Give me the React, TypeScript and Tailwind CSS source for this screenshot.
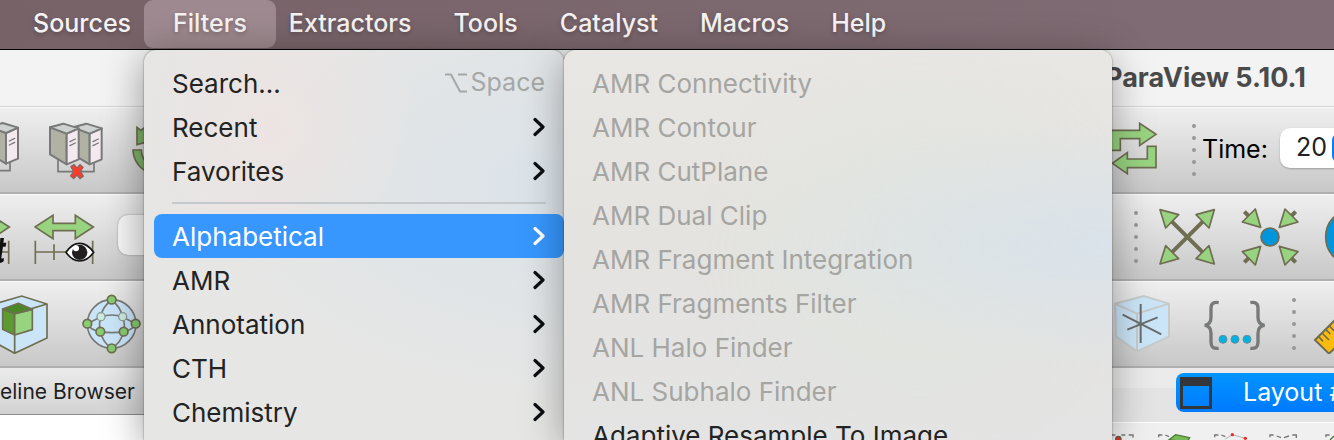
import type { ReactNode } from "react";

const menuTitles = ["Sources", "Filters", "Extractors", "Tools", "Catalyst", "Macros", "Help"];
const filterGroups = ["Alphabetical", "AMR", "Annotation", "CTH", "Chemistry"];
const alphabetical = [
  "AMR Connectivity",
  "AMR Contour",
  "AMR CutPlane",
  "AMR Dual Clip",
  "AMR Fragment Integration",
  "AMR Fragments Filter",
  "ANL Halo Finder",
  "ANL Subhalo Finder",
];

const OLIVE = "#6f6d52";
const GREEN = "#98d480";

function Chevron() {
  return (
    <svg className="h-5 w-3 shrink-0" viewBox="0 0 12 20" fill="none" stroke="currentColor" strokeWidth="3.2" strokeLinecap="round" strokeLinejoin="round" aria-hidden="true">
      <path d="M2 2.5 L10 10 L2 17.5" />
    </svg>
  );
}

function MenuRow({ label, active = false, disabled = false, trailing }: { label: string; active?: boolean; disabled?: boolean; trailing?: ReactNode }) {
  const tone = active ? "rounded-lg bg-[#3797fe] text-white" : disabled ? "text-[#a5a5a2]" : "text-[#222322]";
  return (
    <button type="button" role="menuitem" disabled={disabled} className={`flex h-11 w-full items-center justify-between pr-[19px] pl-[18px] text-left whitespace-nowrap ${tone}`}>
      <span>{label}</span>
      {trailing}
    </button>
  );
}

function SubmenuRow({ label, active }: { label: string; active?: boolean }) {
  return (
    <MenuRow
      label={label}
      active={active}
      trailing={
        <span className={active ? "text-white" : "text-[#0b0f12]"}>
          <Chevron />
        </span>
      }
    />
  );
}

function Icon({ box, className, children }: { box: string; className: string; children: ReactNode }) {
  return (
    <svg viewBox={box} className={`h-[60px] shrink-0 ${className}`} fill="none" aria-hidden="true">
      {children}
    </svg>
  );
}

function Grip({ className }: { className: string }) {
  return (
    <svg viewBox="0 0 4 52" className={`h-[52px] w-1 shrink-0 ${className}`} fill="#979797" aria-hidden="true">
      {[2, 14, 26, 38, 50].map((y) => (
        <circle key={y} cx="2" cy={y} r="2" />
      ))}
    </svg>
  );
}

function Tower() {
  return (
    <g stroke="#777a79" strokeWidth="6" strokeLinejoin="round">
      <path d="M150 82 L200 101 V193 L150 163Z" fill="#b1b2a4" />
      <path d="M200 101 L236 85 V178 L200 193Z" fill="#f4e9ef" />
      <path d="M150 82 L190 71 L236 85 L200 101Z" fill="#ced3d2" />
      <path d="M210 125 L226 117 M210 137 L226 129" strokeWidth="4" strokeLinecap="round" />
    </g>
  );
}

function Toolbar({ left, right }: { left: ReactNode; right: ReactNode }) {
  return (
    <div className="flex h-[87px] shrink-0 justify-between border-t border-b-2 border-t-[#fafafa] border-b-[#afafaf] bg-linear-to-b from-[#efefef] to-[#c8c8c8]">
      <div className="flex items-center">{left}</div>
      <div className="flex w-[222px] items-center overflow-hidden">{right}</div>
    </div>
  );
}

function ConnectBar() {
  return (
    <Toolbar
      left={
        <>
          <Icon box="0 60 60 180" className="w-5">
            <path d="M0 212 H30 V180" stroke="#777a79" strokeWidth="5" />
            <g transform="translate(-182 -2)">
              <Tower />
            </g>
          </Icon>
          <Icon box="144 60 168 180" className="ml-7 w-14">
            <path d="M174 176 V215 H282 V184" stroke="#777a79" strokeWidth="5" />
            <g transform="translate(69 0)">
              <Tower />
            </g>
            <Tower />
            <path d="M213 200 L222 194 L231 204 L240 194 L249 202 L241 215 L250 228 L240 236 L231 225 L221 236 L212 228 L221 215Z" fill="#ff3b28" stroke="#8b6460" strokeWidth="4" />
          </Icon>
          <Icon box="396 60 60 180" className="ml-7 w-5">
            <path d="M411 82 L423 91 Q436 78 456 78 V122 L411 134Z" fill="#7fb569" stroke={OLIVE} strokeWidth="5" />
            <path d="M399 150 H424 Q424 178 448 192 V220 Q401 196 399 150Z" fill="#7fb569" stroke={OLIVE} strokeWidth="5" />
          </Icon>
        </>
      }
      right={
        <>
          <Icon box="36 45 138 180" className="w-[46px]">
            <g fill={GREEN} stroke={OLIVE} strokeWidth="5">
              <path d="M30 76 H119 V55 L168 88 L119 121 V101 H61 V136 H30Z" />
              <path d="M168 124 V188 H82 V206 L37 175 L82 143 V162 H142 V124Z" />
            </g>
          </Icon>
          <Grip className="ml-[34px]" />
          <label htmlFor="time" className="ml-1.5 w-[78px] shrink-0 text-[25px] text-black">Time:</label>
          <div className="mb-1 flex h-10 w-20 shrink-0 items-center rounded-[10px] bg-white pl-4 text-[25px] text-[#222] shadow-[0_1px_2px_#00000040]">
            <input id="time" defaultValue="20" className="w-9 shrink-0 bg-transparent outline-none" />
            <span className="h-7 w-6 rounded-md bg-[#0a7cff]" />
          </div>
        </>
      }
    />
  );
}

function CameraBar() {
  return (
    <Toolbar
      left={
        <>
          <Icon box="0 51 33 180" className="w-[11px]">
            <path d="M-30 96 H0 V93 L28 111 L0 130Z" fill={GREEN} stroke={OLIVE} strokeWidth="5" />
            <path d="M0 186 H26 M26 152 V222" stroke={OLIVE} strokeWidth="5" />
            <path d="M1 144 H12 L10 158 H19 L17 170 H9 L4 203 Q4 208 12 204 L11 214 Q0 222 -8 218 L-6 168 L-12 158 H0Z" fill="#111" />
          </Icon>
          <Icon box="102 51 183 180" className="ml-[23px] w-[61px]">
            <path d="M105 111 L159 76 V100 H226 V76 L280 111 L226 146 V122 H159 V146Z" fill={GREEN} stroke={OLIVE} strokeWidth="5" />
            <path d="M106 152 V222 M162 163 V210 M278 152 V222 M106 186 H200" stroke={OLIVE} strokeWidth="5" />
            <path d="M198 187 Q216 160 239 160 Q262 160 281 187 Q262 213 239 213 Q216 213 198 187Z" fill="#fff" stroke="#141414" strokeWidth="5" />
            <circle cx="239" cy="187" r="23" fill="#231f20" />
            <circle cx="228" cy="175" r="9" fill="#fff" />
          </Icon>
          <input aria-label="Array" className="mb-1 ml-[23px] h-10 w-40 rounded-[10px] bg-[#f7f7f7] shadow-[0_0_2px_#00000060] outline-none" />
        </>
      }
      right={
        <>
          <Grip className="ml-[22px]" />
          <Icon box="174 54 174 180" className="ml-5 w-[58px]">
            <path d="M212 94 L312 194 M312 94 L212 194" stroke={OLIVE} strokeWidth="12" />
            <g fill={GREEN} stroke={OLIVE} strokeWidth="5" strokeLinejoin="round">
              <path d="M180 62 L236 77 L197 117Z" />
              <path d="M343 62 L327 117 L288 77Z" />
              <path d="M180 225 L197 170 L236 209Z" />
              <path d="M343 225 L288 209 L327 170Z" />
            </g>
          </Icon>
          <Icon box="420 54 180 180" className="ml-6 w-[60px]">
            <path d="M433 68 L449 84 M587 68 L571 84 M433 220 L449 204 M587 220 L571 204" stroke={OLIVE} strokeWidth="12" />
            <g fill={GREEN} stroke={OLIVE} strokeWidth="5" strokeLinejoin="round">
              <path d="M482 115 L427 99 L466 60Z" />
              <path d="M538 115 L555 60 L594 99Z" />
              <path d="M482 172 L466 228 L427 188Z" />
              <path d="M538 172 L594 188 L555 228Z" />
            </g>
            <circle cx="510" cy="144" r="27" fill="#0095dc" stroke={OLIVE} strokeWidth="5" />
          </Icon>
          <Icon box="672 54 60 180" className="ml-6 w-5">
            <ellipse cx="742" cy="144" rx="65" ry="76" fill="#0095dc" stroke={OLIVE} strokeWidth="5" />
          </Icon>
        </>
      }
    />
  );
}

function FilterBar() {
  return (
    <Toolbar
      left={
        <>
          <Icon box="0 45 147 180" className="w-[49px]">
            <path d="M-52 85 L65 51 L141 75 V177 L44 223 L-52 170Z" fill="#cbe5f8" stroke={OLIVE} strokeWidth="5" />
            <path d="M44 104 L141 75 M44 104 V223" stroke={OLIVE} strokeWidth="5" />
            <g stroke={OLIVE} strokeWidth="5" strokeLinejoin="round">
              <path d="M8 90 L44 104 V168 L8 151Z" fill="#5c9b32" />
              <path d="M44 104 L97 91 V152 L44 168Z" fill={GREEN} />
              <path d="M8 90 L55 73 L97 91 L44 104Z" fill="#4b8727" />
            </g>
          </Icon>
          <Icon box="243 45 183 180" className="ml-8 w-[61px]">
            <circle cx="335" cy="135" r="73" fill="#cbe5f8" stroke="#777a79" strokeWidth="5" />
            <path d="M335 63 Q305 85 303 113 Q295 135 301 158 Q308 190 335 208 Q364 190 371 158 Q377 135 367 113 Q363 85 335 63 M303 113 Q335 103 367 113 M301 158 Q335 164 371 158 M262 134 L303 113 M262 134 Q270 153 301 158 M407 134 L367 113 M407 134 Q399 153 371 158" stroke="#777a79" strokeWidth="5" />
            <g fill="#88cd70" stroke={OLIVE} strokeWidth="5">
              <circle cx="335" cy="62" r="13" />
              <circle cx="262" cy="134" r="13" />
              <circle cx="407" cy="134" r="13" />
              <circle cx="301" cy="158" r="13" />
              <circle cx="371" cy="158" r="13" />
              <circle cx="335" cy="208" r="13" />
            </g>
            <g fill="#ccebe0" stroke="#8d9c94" strokeWidth="4">
              <circle cx="303" cy="113" r="12" />
              <circle cx="368" cy="113" r="12" />
            </g>
          </Icon>
        </>
      }
      right={
        <>
          <Icon box="36 45 177 180" className="w-[59px]">
            <path d="M45 74 L131 51 L207 74 V173 L111 217 L48 173Z" fill="#cbe5f8" stroke="#c6cbca" strokeWidth="6" />
            <path d="M45 74 L111 104 L207 74 M111 104 V217" stroke="#c6cbca" strokeWidth="6" />
            <path d="M122 75 V192 M68 107 L184 166 M82 152 L173 115" stroke="#696d6e" strokeWidth="6" />
          </Icon>
          <Icon box="309 45 189 180" className="ml-8 w-[63px]">
            <path d="M356 71 Q333 67 333 88 V115 Q333 137 314 139 Q333 141 333 163 V190 Q333 211 356 208 M451 71 Q474 67 474 88 V115 Q474 137 494 139 Q474 141 474 163 V190 Q474 211 451 208" stroke="#777a79" strokeWidth="10" />
            <g fill="#00b2e2" stroke="#6c8f98" strokeWidth="3">
              <circle cx="369" cy="181" r="12" />
              <circle cx="405" cy="181" r="12" />
              <circle cx="441" cy="181" r="12" />
            </g>
          </Icon>
          <Grip className="ml-[26px]" />
          <Icon box="639 45 75 180" className="ml-[17px] w-[25px]">
            <path d="M645 183 L730 98 V183 L687 224Z" fill="#fdbb0d" stroke={OLIVE} strokeWidth="6" />
            <path d="M656 173 L669 187 M666 162 L687 183 M677 151 L691 165 M687 140 L708 161" stroke={OLIVE} strokeWidth="5" />
          </Icon>
        </>
      }
    />
  );
}

function SelectionIcons() {
  return (
    <svg viewBox="36 174 666 51" className="h-[17px] w-[222px] shrink-0" fill="none" aria-hidden="true">
      <path d="M36 210 H46 M64 210 H76 M86 210 H99 V218 M176 217 V210 H187 M196 210 L207 215 M344 217 V210 H355 M364 210 L376 215 M510 217 V210 H521 M530 213 L543 218 M552 218 L567 213 M577 210 H589 V219 M678 217 V210 H689" stroke="#777" strokeWidth="4" />
      <circle cx="55" cy="222" r="8" fill="#f2261d" stroke="#606052" strokeWidth="4" />
      <path d="M206 225 L227 209 L269 218 L262 230Z" fill="#78ba57" stroke="#4b7a35" strokeWidth="4" />
      <path d="M376 222 L397 209 L436 220" stroke="#b3b3b3" strokeWidth="3" />
      <circle cx="397" cy="209" r="5" fill="#f2261d" />
      <circle cx="436" cy="220" r="5" fill="#f2261d" />
      <path d="M690 225 L702 213" stroke="#4b7a35" strokeWidth="4" />
    </svg>
  );
}

export default function App() {
  return (
    <div className="relative flex h-screen flex-col overflow-hidden bg-white font-['Inter','Liberation_Sans',sans-serif]">
      <nav aria-label="Menu bar" className="flex h-[50px] shrink-0 items-start border-b border-black bg-linear-to-r from-[#776268] to-[#806c74] pl-3 text-[25px] font-medium text-[#f5f2f3]">
        {menuTitles.map((title) => (
          <button
            key={title}
            type="button"
            className={`h-12 whitespace-nowrap [text-shadow:0_2px_4px_#00000040] ${title === "Filters" ? "-mx-2 rounded-[9px] bg-[#9d898f] px-[29px]" : "px-[21px]"}`}
          >
            {title}
          </button>
        ))}
      </nav>

      <header className="flex h-[57px] shrink-0 justify-end border-b border-[#d4d4d4] bg-[#f3f3f3]">
        <h1 className="flex w-[229px] items-center text-[27px] font-bold whitespace-nowrap text-[#4a4a4a]">ParaView 5.10.1</h1>
      </header>
      <ConnectBar />
      <CameraBar />
      <FilterBar />

      <main className="flex min-h-0 grow justify-between">
        <section className="grow bg-white">
          <h2 className="flex h-[47px] items-center border-b border-[#8d8d8d] bg-linear-to-b from-[#ebebeb] to-[#d2d2d2] pt-0.5 text-[21px] font-normal text-[#1f1f1f]">
            eline Browser
          </h2>
        </section>
        <section className="flex w-[222px] flex-col overflow-hidden bg-[#f0f0f0]">
          <div className="flex h-[55px] shrink-0 items-start border-b border-white bg-linear-to-b from-[#ebebeb] from-36% to-[#e4e4e4] to-37% pt-[5px] pl-16">
            <button type="button" className="flex h-[39px] shrink-0 items-center gap-[31px] rounded-lg bg-linear-to-b from-[#0594ff] to-[#007aff] pr-5 pl-1 text-[25px] whitespace-nowrap text-white">
              <svg viewBox="0 0 32 32" className="size-8" aria-hidden="true">
                <path fillRule="evenodd" d="M0 0H32V32H0ZM3 9V29H29V9Z" fill="#343639" />
              </svg>
              Layout #
            </button>
          </div>
          <SelectionIcons />
        </section>
      </main>

      <div role="menu" aria-label="Filters" className="absolute top-[50px] bottom-0 left-36 w-[420px] rounded-t-xl bg-[#e6e6e5] bg-[radial-gradient(circle_at_30%_20%,#ece4e2,transparent_35%),radial-gradient(ellipse_at_100%_35%,#dbe3e9,transparent_60%)] pt-[11px] pl-2.5 text-[26px] shadow-[0_8px_40px_#00000066,0_0_2px_#00000080]">
        <MenuRow
          label="Search..."
          trailing={
            <kbd className="flex items-center gap-1 font-[inherit] text-[25px] text-[#a6a8a8]">
              <svg viewBox="0 0 22 20" className="h-5 w-[22px]" fill="none" stroke="currentColor" strokeWidth="2" aria-hidden="true">
                <path d="M0 1.5 H6 L15 18.5 H22 M13 1.5 H22" />
              </svg>
              Space
            </kbd>
          }
        />
        <SubmenuRow label="Recent" />
        <SubmenuRow label="Favorites" />
        <div role="separator" className="mt-[9px] mr-[18px] mb-2.5 ml-[18px] h-0.5 bg-[#c5c9cc]" />
        {filterGroups.map((group) => (
          <SubmenuRow key={group} label={group} active={group === "Alphabetical"} />
        ))}
      </div>

      <div role="menu" aria-label="Alphabetical" className="absolute top-[50px] bottom-0 left-[564px] w-[548px] rounded-t-xl bg-linear-to-b from-[#e9e7e4] via-[#e4e3e0] to-[#e4e4e4] shadow-[0_8px_40px_#00000059,0_0_2px_#00000080]">
        <div className="h-full overflow-hidden rounded-t-xl bg-[radial-gradient(ellipse_at_100%_50%,#d9e2ea,transparent_45%),radial-gradient(circle_at_65%_50%,#e1e5df,transparent_55%)] pt-[11px] pl-2.5 text-[26px]">
          {alphabetical.map((name) => (
            <MenuRow key={name} label={name} disabled />
          ))}
          <MenuRow label="Adaptive Resample To Image" />
        </div>
      </div>
    </div>
  );
}
